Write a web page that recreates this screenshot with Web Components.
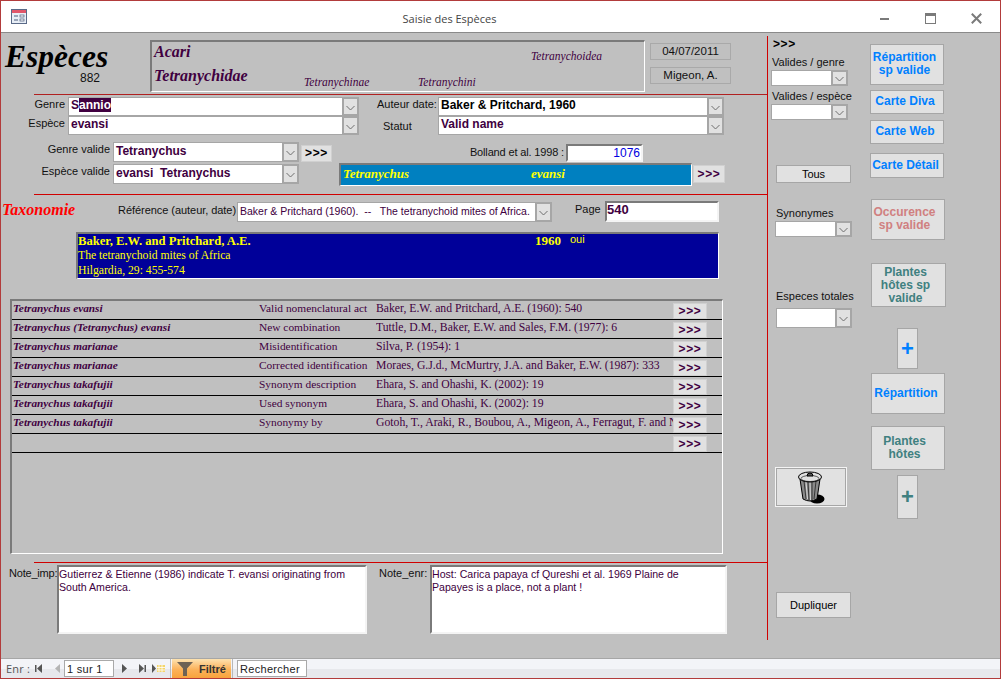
<!DOCTYPE html>
<html lang="fr"><head><meta charset="utf-8"><title>Saisie des Espèces</title>
<style>html,body{margin:0;padding:0;background:#c0c0c0;overflow:hidden}</style></head>
<body>
<access-window></access-window>
<script>
const SANS='"Liberation Sans",Arial,sans-serif', SERIF='"Liberation Serif","Times New Roman",serif';
function def(name,css,html,init){
  customElements.define(name,class extends HTMLElement{
    connectedCallback(){
      if(this.shadowRoot)return;
      const r=this.attachShadow({mode:'open'});
      r.innerHTML='<style>'+css+'</style>'+(typeof html==='function'?html(this):html);
      if(init)init(this,r);
    }
  });
}
const chevron='<svg width="9" height="6" viewBox="0 0 9 6"><path d="M.5 1 4.5 5 8.5 1" fill="none" stroke="#6e6e6e" stroke-width="1"/></svg>';

def('combo-box',`
 :host{display:flex;box-sizing:border-box;border:1px solid #a6a6a6;background:#fff;font:bold 12px ${SANS};color:#400040;letter-spacing:0;overflow:visible}
 .t{flex:1;min-width:0;padding:0 0 3px 2px;white-space:pre;overflow:hidden;display:flex;align-items:center}
 .a{flex:none;box-sizing:border-box;width:17px;margin:-1px -1px -1px 0;background:#e1e1e1;border:2px solid #a6a6a6;display:flex;align-items:center;justify-content:center;padding-top:2px}
`,`<div class="t"><slot></slot></div><div class="a">${chevron}</div>`);

def('push-button',`
 :host{display:flex;box-sizing:border-box;border:1px solid #a6a6a6;background:#e1e1e1;align-items:center;justify-content:center;text-align:center;font:11px/13px ${SANS};color:#000;white-space:pre}
`,`<slot></slot>`);

def('more-button',`
 :host{display:flex;box-sizing:border-box;border:1px solid #d0d0d0;background:#e1e1e1;align-items:center;justify-content:center;font:bold 12px ${SANS};color:#400040;letter-spacing:.6px;padding-bottom:1px}
`,`&gt;&gt;&gt;`);

def('sunken-box',`
 :host{display:block;box-sizing:border-box;border-style:solid;border-width:2px 1px 1px 2px;border-color:#7a7a7a #fff #fff #7a7a7a}
`,`<slot></slot>`);

def('form-field',`
 :host{display:block;box-sizing:border-box;border-style:solid;border-width:2px 2px 2px 2px;border-color:#7a7a7a #f4f4f4 #f4f4f4 #7a7a7a;background:#fff;color:#400040;overflow:hidden}
`,`<slot></slot>`);

def('title-bar',`
 :host{display:flex;box-sizing:border-box;height:32px;background:#fff;border-bottom:1px solid #8a8a8a;position:relative;align-items:center}
 .ic{margin-left:10px;flex:none;display:flex}
 .ti{flex:1;text-align:center;font:11px "Open Sans","Noto Sans",sans-serif;color:#444;padding-left:10px;margin-top:3px}
 .b{flex:none;width:46px;display:flex;justify-content:center;align-items:center;margin-top:4px}
`,`<span class="ic"><svg width="17" height="16" viewBox="0 0 17 16">
 <rect x=".5" y=".5" width="15" height="14" fill="#fff" stroke="#5a6a88"/><rect x="1" y="1" width="14" height="3" fill="#e0566a"/>
 <rect x="1" y="4" width="14" height="10" fill="#e8eef6"/><path d="M3 7H7M3 11H7" stroke="#4b5b7a"/><rect x="9" y="6" width="4" height="2" fill="#fff" stroke="#4b5b7a" stroke-width=".7"/><rect x="9" y="10" width="4" height="2" fill="#fff" stroke="#4b5b7a" stroke-width=".7"/></svg></span>
 <div class="ti">Saisie des Espèces</div>
 <span class="b"><svg width="11" height="11" viewBox="0 0 11 11"><rect x="1" y="5" width="9" height="2" fill="#7a7a7a"/></svg></span>
 <span class="b"><svg width="11" height="11" viewBox="0 0 11 11"><rect x=".5" y=".5" width="10" height="10" fill="none" stroke="#7a7a7a"/><rect x="1" y="1" width="9" height="2" fill="#7a7a7a"/></svg></span>
 <span class="b" style="margin-right:1px"><svg width="11" height="11" viewBox="0 0 11 11"><path d="M.8 .8 10.2 10.2M10.2 .8 .8 10.2" stroke="#7a7a7a" stroke-width="2"/></svg></span>`);

def('nav-bar',`
 :host{display:flex;box-sizing:border-box;height:20px;border-top:1px solid #a6a6a6;background:linear-gradient(#f3f4f8 0,#f3f4f8 10px,#e7e8ec 10px);align-items:center;font:11px "Open Sans","Noto Sans",sans-serif;color:#222}
 .e{margin-left:5px;color:#555;width:29px;flex:none;letter-spacing:.2px}
 svg{flex:none;display:block}
 .box{flex:none;box-sizing:border-box;background:#fff;border:1px solid #a9a9a9;height:17px;display:flex;align-items:center;padding-left:2px;font-family:${SANS};font-size:11px;letter-spacing:.3px}
 .sep{flex:none;width:1px;height:19px;background:#b8b8b8}
 .fil{flex:none;box-sizing:border-box;width:59px;height:19px;margin-left:1px;background:linear-gradient(#fde2b0,#fbb25a 55%,#f9a33c);display:flex;align-items:center;font-family:${SANS};font-size:11px;font-weight:bold;color:#333}
`,`<span class="e">Enr :</span>
 <svg style="margin-left:0" width="8" height="9" viewBox="0 0 8 9"><rect x="0" y="1" width="1.5" height="7" fill="#555"/><path d="M7 0V9L2 4.5Z" fill="#555"/></svg>
 <svg style="margin-left:12px" width="5" height="9" viewBox="0 0 5 9"><path d="M5 0V9L0 4.5Z" fill="#b5b5b5"/></svg>
 <div class="box" style="margin-left:4px;width:50px">1 sur 1</div>
 <svg style="margin-left:8px" width="5" height="9" viewBox="0 0 5 9"><path d="M0 0V9L5 4.5Z" fill="#555"/></svg>
 <svg style="margin-left:12px" width="7" height="9" viewBox="0 0 7 9"><path d="M0 0V9L5 4.5Z" fill="#555"/><rect x="5.5" y="1" width="1.5" height="7" fill="#555"/></svg>
 <svg style="margin-left:6px" width="14" height="9" viewBox="0 0 14 9"><path d="M0 0V9L4 4.5Z" fill="#555"/><rect x="5" y="1" width="8" height="7" fill="#f4d56a"/><path d="M7 1V8M10 1V8M5 3.5H13M5 6H13" stroke="#fff" stroke-width=".8"/></svg>
 <div class="sep" style="margin-left:4px"></div>
 <div class="fil"><svg style="margin:0 6px 0 5px" width="16" height="14" viewBox="0 0 16 14"><path d="M0 0H16L10 6.5V14H6V6.5Z" fill="#6e6254"/></svg>Filtré</div>
 <div class="sep" style="margin-left:1px"></div>
 <div class="box" style="margin-left:4px;width:70px">Rechercher</div>`);

def('taxon-row',`
 :host{display:grid;grid-template-columns:247px 117px 297px 34px;box-sizing:border-box;height:19px;border-bottom:1px solid #000;font:11.4px/14px ${SERIF};color:#400040;white-space:nowrap}
 div{overflow:hidden}
 .n{font-weight:bold;font-style:italic;font-size:11.3px;padding-left:1px}
 .c{font-size:11.7px;line-height:16px}
 more-button{height:16px;margin-top:2px;box-sizing:border-box}
`,h=>`<div class="n">${h.getAttribute('name')||''}</div><div>${h.getAttribute('act')||''}</div><div class="c">${h.getAttribute('cit')||''}</div><more-button></more-button>`);

def('species-header',`
 :host{display:flex;height:61px}
 .ti{width:145px;margin-left:5px;flex:none}
 .h{font:italic bold 31.5px/30px ${SERIF};color:#000;margin-top:9px}
 .id{font:12px/12px ${SANS};margin:0 0 0 75px;color:#111}
 sunken-box{width:495px;height:52px;margin-top:7px;flex:none;box-sizing:border-box}
 .g{display:grid;grid-template-columns:150px 114px 113px 1fr;grid-template-rows:24px 22px;font-family:${SERIF};color:#400040;font-style:italic;font-weight:bold;font-size:11px;padding-left:2px;white-space:nowrap}
 .big{font-size:16px;line-height:20px}
 .sm{font-style:italic;font-size:11.5px;align-self:end;line-height:13px;font-weight:normal;margin-bottom:-1px}
 .dates{margin:10px 0 0 5px;width:81px;display:flex;flex-direction:column;gap:7px;flex:none}
 .d{box-sizing:border-box;height:17px;border:1px solid #a9a9a9;font:11.5px/15px ${SANS};text-align:center;color:#111}
`,`<div class="ti"><div class="h">Espèces</div><div class="id">882</div></div>
 <sunken-box><div class="g">
  <span class="big" style="grid-area:1/1">Acari</span>
  <span class="sm" style="grid-area:1/4;align-self:start;margin-top:8px">Tetranychoidea</span>
  <span class="big" style="grid-area:2/1">Tetranychidae</span>
  <span class="sm" style="grid-area:2/2">Tetranychinae</span>
  <span class="sm" style="grid-area:2/3">Tetranychini</span>
 </div></sunken-box>
 <div class="dates"><div class="d">04/07/2011</div><div class="d">Migeon, A.</div></div>`);

def('species-main',`
 :host{display:flex;flex-direction:column;width:767px;margin-left:-1px;font:11px/14px ${SANS};color:#111;flex:none}
 .rule{height:1px;margin-left:34px;background:#d00000;flex:none}
 .r1{background:#b02020}
 .grid1{margin-top:2px;display:grid;grid-template-columns:65px 294px 18px 61px 286px;grid-template-rows:19px 19px}
 .lab{text-align:right;white-space:nowrap}
 .grid1 combo-box{margin-left:3px}
 .grid1 .last{margin-left:0}
 .grid2{margin-top:7px;display:grid;grid-template-columns:110px 188px 41px 353px 33px;grid-template-rows:21px 23px}
 .bol{display:flex;justify-content:flex-end;align-items:flex-start;gap:2px;padding-right:49px;margin-top:2px;white-space:nowrap}
 .bol span{padding-top:1px;letter-spacing:-.15px}
 .num{width:77px;height:18px;box-sizing:border-box;color:#0000e0;font-size:12px;line-height:14px;text-align:right;padding-right:1px}
 .bar{background:#0080c0;font:italic bold 13px/18px ${SERIF};color:#ff0;display:flex;white-space:nowrap;padding-left:2px}
 .bar span:first-child{width:188px}
 .tax{margin-top:6px;height:22px;display:flex;white-space:nowrap}
 .tx{width:116px;margin-left:2px;font:italic bold 16px/18px ${SERIF};color:#f00;flex:none}
 .ref{width:119px;padding-top:2px;flex:none;letter-spacing:-.05px}
 .refc{width:315px;height:20px;margin-top:1px;flex:none;font-weight:normal;font-size:10.5px}
 .pg{margin-left:23px;width:30px;padding-top:1px;flex:none}
 .pgv{width:114px;height:21px;font:bold 13px/14px ${SANS};padding-left:0;flex:none}
 .ref-box{margin:9px 0 0 76px;width:643px;height:47px;background:#000099;font-family:${SERIF};color:#ff0;display:grid;grid-template-columns:457px 35px 1fr;grid-template-rows:15px 15px 13px;white-space:nowrap}
 .a{font:bold 12.6px/16px ${SERIF};margin-top:-1px}
 .l{font-size:11.7px;line-height:14px}
 .y{font:bold 13px/16px ${SERIF};margin-top:-1px}
 .o{font:11px/14px ${SANS};margin-top:-2px}
 .table{margin:20px 0 0 10px;width:713px;height:255px;padding-bottom:1px;flex:none}
 .rule2{margin-top:8px}
 .notes{margin-top:2px;display:flex;height:69px;white-space:nowrap}
 .n1{width:46px;margin-left:9px;padding-top:1px;flex:none;letter-spacing:-.2px}
 .note{box-sizing:border-box;height:69px;flex:none;white-space:normal;font:10.6px/13px ${SANS};padding:1px 0;color:#400040}
 .n2{width:47px;margin-left:12px;padding-top:1px;flex:none}
`,`<species-header></species-header>
 <div class="rule r1"></div>
 <div class="grid1">
  <div class="lab">Genre</div>
  <combo-box><span style="white-space:pre">S<span style="background:#400040;color:#fff">annio</span></span></combo-box>
  <span></span><div class="lab" style="grid-column:4;text-align:left;">Auteur date:</div>
  <combo-box class="last" style="color:#000">Baker &amp; Pritchard, 1960</combo-box>
  <div class="lab">Espèce</div>
  <combo-box>evansi</combo-box>
  <span></span><div class="lab" style="grid-column:4;text-align:left;padding:3px 0 0 6px">Statut</div>
  <combo-box class="last">Valid name</combo-box>
 </div>
 <div class="grid2">
  <div class="lab">Genre valide</div>
  <combo-box style="margin-left:3px;width:186px;height:20px">Tetranychus</combo-box>
  <more-button style="margin:3px 7px 1px 3px;height:17px;color:#000"></more-button>
  <div class="bol"><span>Bolland et al. 1998 :</span><form-field class="num">1076</form-field></div>
  <span></span>
  <div class="lab" style="padding-top:1px">Espèce valide</div>
  <combo-box style="margin:1px 0 2px 3px;width:186px;height:20px">evansi&nbsp; Tetranychus</combo-box>
  <span></span>
  <sunken-box class="bar"><span>Tetranychus</span><span>evansi</span></sunken-box>
  <more-button style="margin:2px 0 3px 1px;height:18px"></more-button>
 </div>
 <div class="rule" style="margin-top:8px"></div>
 <div class="tax">
  <div class="tx">Taxonomie</div>
  <div class="ref">Référence (auteur, date)</div>
  <combo-box class="refc">Baker &amp; Pritchard (1960).&nbsp; --&nbsp;&nbsp; The tetranychoid mites of Africa.</combo-box>
  <div class="pg">Page</div>
  <form-field class="pgv">540</form-field>
 </div>
 <sunken-box class="ref-box">
  <div class="a" style="grid-area:1/1">Baker, E.W. and Pritchard, A.E.</div>
  <div class="y" style="grid-area:1/2">1960</div>
  <div class="o" style="grid-area:1/3">oui</div>
  <div class="l" style="grid-area:2/1">The tetranychoid mites of Africa</div>
  <div class="l" style="grid-area:3/1">Hilgardia, 29: 455-574</div>
 </sunken-box>
 <sunken-box class="table">
  <taxon-row name="Tetranychus evansi" act="Valid nomenclatural act" cit="Baker, E.W. and Pritchard, A.E. (1960): 540"></taxon-row>
  <taxon-row name="Tetranychus (Tetranychus) evansi" act="New combination" cit="Tuttle, D.M., Baker, E.W. and Sales, F.M. (1977): 6"></taxon-row>
  <taxon-row name="Tetranychus marianae" act="Misidentification" cit="Silva, P. (1954): 1"></taxon-row>
  <taxon-row name="Tetranychus marianae" act="Corrected identification" cit="Moraes, G.J.d., McMurtry, J.A. and Baker, E.W. (1987): 333"></taxon-row>
  <taxon-row name="Tetranychus takafujii" act="Synonym description" cit="Ehara, S. and Ohashi, K. (2002): 19"></taxon-row>
  <taxon-row name="Tetranychus takafujii" act="Used synonym" cit="Ehara, S. and Ohashi, K. (2002): 19"></taxon-row>
  <taxon-row name="Tetranychus takafujii" act="Synonymy by" cit="Gotoh, T., Araki, R., Boubou, A., Migeon, A., Ferragut, F. and N"></taxon-row>
  <taxon-row></taxon-row>
 </sunken-box>
 <div class="rule rule2"></div>
 <div class="notes">
  <div class="n1">Note_imp:</div>
  <form-field class="note" style="margin-left:2px;width:310px">Gutierrez &amp; Etienne (1986) indicate T. evansi originating from South America.</form-field>
  <div class="n2">Note_enr:</div>
  <span style="width:4px;flex:none"></span>
  <form-field class="note" style="width:297px">Host: Carica papaya cf Qureshi et al. 1969 Plaine de<br>Papayes is a place, not a plant !</form-field>
 </div>`);

const trash=`<svg width="28" height="34" viewBox="0 0 28 34">
 <ellipse cx="20" cy="29" rx="7.5" ry="4.5" fill="#000"/>
 <path d="M3 9 6 29Q13 33 20 29L23 9Z" fill="#8a8a8a" stroke="#000"/>
 <path d="M7 11 9 29M11 12 12 30M15 12 15 30M19 11 17 29" stroke="#222" stroke-width=".8"/>
 <path d="M9 12 10.5 29M13 12 13.5 30" stroke="#d8d8d8"/>
 <ellipse cx="13" cy="7" rx="11.5" ry="5" fill="#e1e1e1" stroke="#000"/>
 <ellipse cx="13" cy="8.5" rx="9" ry="3" fill="none" stroke="#000" stroke-width=".6"/>
 <path d="M10 6Q10 3 13 3T16 6Z" fill="#555" stroke="#000"/>
</svg>`;

def('species-side',`
 :host{display:flex;box-sizing:border-box;margin-top:3px;height:604px;border-left:1px solid #d00000;flex:none;width:232px;font:11px/14px ${SANS};color:#111;white-space:nowrap}
 .a{width:102px;flex:none;display:flex;flex-direction:column;align-items:flex-start}
 .b{flex:none;display:flex;flex-direction:column;align-items:flex-start}
 .arr{font:bold 12px/12px ${SANS};color:#000;margin:2px 0 0 5px;letter-spacing:.6px}
 push-button.bl,push-button.rd,push-button.tl{font-weight:bold;font-size:12px}
 .bl{color:#0080ff}
 .rd{color:#d08080}
 .tl{color:#408080}
 push-button.pl{font-size:22px;line-height:22px}
`,`<div class="a">
  <div class="arr">&gt;&gt;&gt;</div>
  <div style="margin:5px 0 0 4px">Valides / genre</div>
  <combo-box style="margin:1px 0 0 3px;width:77px;height:16px"></combo-box>
  <div style="margin:3px 0 0 4px">Valides / espèce</div>
  <combo-box style="margin:1px 0 0 3px;width:77px;height:16px"></combo-box>
  <push-button style="margin:45px 0 0 8px;width:75px;height:18px">Tous</push-button>
  <div style="margin:23px 0 0 8px">Synonymes</div>
  <combo-box style="margin:1px 0 0 7px;width:77px;height:16px"></combo-box>
  <div style="margin:52px 0 0 8px">Especes totales</div>
  <combo-box style="margin:5px 0 0 8px;width:76px;height:20px"></combo-box>
  <push-button style="margin:140px 0 0 8px;width:70px;height:38px;outline:1px solid #f4f4f4">${trash}</push-button>
  <push-button style="margin:86px 0 0 8px;width:75px;height:26px">Dupliquer</push-button>
 </div>
 <div class="b">
  <push-button class="bl" style="margin-top:8px;width:74px;height:41px;padding:0 5px 2px 0">Répartition
sp valide</push-button>
  <push-button class="bl" style="margin-top:5px;width:74px;height:24px;padding:0 4px 1px 0">Carte Diva</push-button>
  <push-button class="bl" style="margin-top:6px;width:74px;height:24px;padding:0 4px 1px 0">Carte Web</push-button>
  <push-button class="bl" style="margin-top:9px;width:74px;height:25px;padding:0 3px 1px 0">Carte Détail</push-button>
  <push-button class="rd" style="margin:21px 0 0 1px;width:74px;height:41px;padding:0 7px 2px 0">Occurence
sp valide</push-button>
  <push-button class="tl" style="margin:23px 0 0 1px;width:75px;height:44px;padding-right:6px">Plantes
hôtes sp
valide</push-button>
  <push-button class="bl pl" style="margin:21px 0 0 27px;width:21px;height:41px">+</push-button>
  <push-button class="bl" style="margin:4px 0 0 1px;width:74px;height:41px;padding-right:4px">Répartition</push-button>
  <push-button class="tl" style="margin:12px 0 0 1px;width:74px;height:44px;padding-right:7px">Plantes
hôtes</push-button>
  <push-button class="tl pl" style="margin:5px 0 0 27px;width:21px;height:44px">+</push-button>
 </div>`);

def('access-window',`
 :host{display:flex;flex-direction:column;box-sizing:border-box;width:1001px;height:679px;border:1px solid #b23b3b;background:#c0c0c0;overflow:hidden}
 .form{flex:1;min-height:0;display:flex;align-items:flex-start}
`,`<title-bar></title-bar><div class="form"><species-main></species-main><species-side></species-side></div><nav-bar></nav-bar>`);
</script>
</body></html>
